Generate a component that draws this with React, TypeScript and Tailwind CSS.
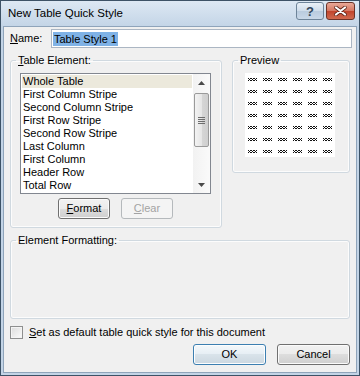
import React from 'react';

const items = [
  'Whole Table',
  'First Column Stripe',
  'Second Column Stripe',
  'First Row Stripe',
  'Second Row Stripe',
  'Last Column',
  'First Column',
  'Header Row',
  'Total Row',
];

// tiny "xxx" sample glyph used in the preview grid
const Sample = () => {
  const px: [number, number][] = [];
  [0, 3, 6].forEach((o) => {
    px.push([o, 0], [o + 2, 0], [o + 1, 1], [o, 2], [o + 2, 2]);
  });
  return (
    <svg width="9" height="3" viewBox="0 0 9 3" className="block" shapeRendering="crispEdges">
      {px.map(([x, y], i) => (
        <rect key={i} x={x} y={y} width="1" height="1" fill="#111111" />
      ))}
    </svg>
  );
};

const Btn: React.FC<{ children: React.ReactNode; w: string; disabled?: boolean; primary?: boolean }> = ({
  children,
  w,
  disabled,
  primary,
}) => (
  <button
    className={`${w} h-[21px] rounded-[3px] border text-[11px] leading-none flex items-center justify-center ${
      disabled
        ? 'border-[#b5b9bc] bg-[#f4f4f4] text-[#a3a3a3]'
        : primary
        ? 'border-[#3c7fb1] bg-[linear-gradient(#f4f8fb,#e6eef4_50%,#d9e3ea_50%,#cbd7e0)] text-black shadow-[inset_0_0_0_1px_#fcfdfe]'
        : 'border-[#707070] bg-[linear-gradient(#f2f2f2,#ebebeb_50%,#dddddd_50%,#cfcfcf)] text-black shadow-[inset_0_0_0_1px_#fbfbfb]'
    }`}
  >
    {children}
  </button>
);

const App: React.FC = () => {
  return (
    <div
      className="w-[360px] h-[376px] bg-[#c3d4e6] border border-[#3d5266] flex flex-col text-black"
      style={{ fontFamily: '"Liberation Sans", Arial, sans-serif' }}
    >
      {/* Title bar */}
      <div className="h-[25px] flex items-start pl-[7px] pr-[4px] bg-[linear-gradient(#dde8f3,#c4d5e7)]">
        <span className="mt-[5px] text-[11.5px] leading-[14px]">New Table Quick Style</span>
        <div className="ml-auto mt-[1px] flex gap-[2px]">
          <div className="w-[28px] h-[18px] rounded-[3px] border border-[#6e8499] bg-[linear-gradient(#e9f0f7,#cfdcea_50%,#b9cbde_50%,#c9d8e8)] flex items-center justify-center text-[13px] font-bold text-[#33475b] leading-none">
            ?
          </div>
          <div className="w-[29px] h-[18px] rounded-[3px] border border-[#6b3328] bg-[linear-gradient(#e9a998,#d5755f_50%,#c1432b_50%,#d06a4f)] flex items-center justify-center">
            <svg width="13" height="10" viewBox="0 0 13 10">
              <path d="M2 1.5 L11 8.5 M11 1.5 L2 8.5" stroke="#5a2418" strokeWidth="3.6" strokeLinecap="round" />
              <path d="M2 1.5 L11 8.5 M11 1.5 L2 8.5" stroke="#ffffff" strokeWidth="2.2" strokeLinecap="round" />
            </svg>
          </div>
        </div>
      </div>

      {/* Dialog body */}
      <div className="flex-1 mx-[2px] mb-[2px] bg-[#f0f0f0] border border-[#8fa4ba] flex flex-col text-[11px] leading-[13px]">
        {/* Name row */}
        <div className="mt-[2px] flex items-center pl-[6px]">
          <span className="w-[41px]">
            <u>N</u>ame:
          </span>
          <div className="w-[301px] h-[19px] border border-[#abb6c3] bg-white flex items-center pl-[1px]">
            <span className="bg-[#7fb2e6] px-[1px] leading-[14px]">Table Style 1</span>
          </div>
        </div>

        {/* Table element + preview */}
        <div className="mt-[5px] flex items-start pl-[6px] gap-[10px]">
          <fieldset className="w-[212px] h-[175px] border border-[#d0d9e0] rounded-[3px] shadow-[inset_0_0_0_1px_#fcfcfc]">
            <legend className="ml-[5px] px-[2px] leading-[14px]">
              <u>T</u>able Element:
            </legend>
            <div className="pl-[9px] pt-[6px]">
              <div className="w-[191px] h-[121px] border border-[#828790] bg-white flex">
                <div className="w-[172px] pt-[1px] px-[1px]">
                  {items.map((it, i) => (
                    <div
                      key={it}
                      className={`h-[13px] pl-[1px] leading-[13px] whitespace-nowrap ${i === 0 ? 'bg-[#ece9dc]' : ''}`}
                    >
                      {it}
                    </div>
                  ))}
                </div>
                {/* scrollbar */}
                <div className="w-[17px] flex flex-col bg-[linear-gradient(90deg,#f2f2f2,#fafafa)]">
                  <div className="h-[17px] flex items-center justify-center">
                    <svg width="7" height="4" viewBox="0 0 7 4">
                      <path d="M3.5 0 L7 4 L0 4 Z" fill="#4a4a4a" />
                    </svg>
                  </div>
                  <div className="mt-[2px] mx-[1px] h-[54px] rounded-[2px] border border-[#9a9a9a] bg-[linear-gradient(90deg,#f3f3f3,#e6e6e6_50%,#d6d6d6_50%,#cfcfcf)] flex flex-col items-center justify-center gap-[1px]">
                    <div className="w-[7px] h-[1px] bg-[#6d6d6d]" />
                    <div className="w-[7px] h-[1px] bg-[#6d6d6d]" />
                    <div className="w-[7px] h-[1px] bg-[#6d6d6d]" />
                    <div className="w-[7px] h-[1px] bg-[#6d6d6d]" />
                  </div>
                  <div className="mt-auto h-[17px] flex items-center justify-center">
                    <svg width="7" height="4" viewBox="0 0 7 4">
                      <path d="M0 0 L7 0 L3.5 4 Z" fill="#4a4a4a" />
                    </svg>
                  </div>
                </div>
              </div>
              <div className="mt-[4px] flex justify-center gap-[11px] w-[191px]">
                <Btn w="w-[52px]">
                  <span>
                    <u>F</u>ormat
                  </span>
                </Btn>
                <Btn w="w-[52px]" disabled>
                  <span>
                    <u>C</u>lear
                  </span>
                </Btn>
              </div>
            </div>
          </fieldset>

          <fieldset className="w-[118px] h-[120px] border border-[#d0d9e0] rounded-[3px] shadow-[inset_0_0_0_1px_#fcfcfc]">
            <legend className="ml-[5px] px-[2px] leading-[14px]">Preview</legend>
            <div className="pl-[12px] pt-[6px]">
              <div className="w-[90px] h-[84px] bg-white grid grid-cols-6 auto-rows-[12px]">
                {Array.from({ length: 42 }).map((_, i) => (
                  <div key={i} className="flex items-center justify-center">
                    <Sample />
                  </div>
                ))}
              </div>
            </div>
          </fieldset>
        </div>

        {/* Element formatting */}
        <div className="mt-[5px] pl-[6px]">
          <fieldset className="w-[340px] h-[86px] border border-[#d0d9e0] rounded-[3px] shadow-[inset_0_0_0_1px_#fcfcfc]">
            <legend className="ml-[5px] px-[2px] leading-[14px]">Element Formatting:</legend>
          </fieldset>
        </div>

        {/* default checkbox */}
        <div className="mt-[7px] pl-[6px] flex items-center gap-[6px]">
          <div className="w-[13px] h-[13px] border border-[#8e8f8f] bg-[linear-gradient(135deg,#dcdcdc,#fbfbfb)] shadow-[inset_0_0_0_1px_#f4f4f4]" />
          <span>
            <u>S</u>et as default table quick style for this document
          </span>
        </div>

        {/* dialog buttons */}
        <div className="mt-[5px] flex justify-end gap-[11px] pr-[6px]">
          <Btn w="w-[73px]" primary>
            OK
          </Btn>
          <Btn w="w-[73px]">Cancel</Btn>
        </div>
      </div>
    </div>
  );
};

export default App;
